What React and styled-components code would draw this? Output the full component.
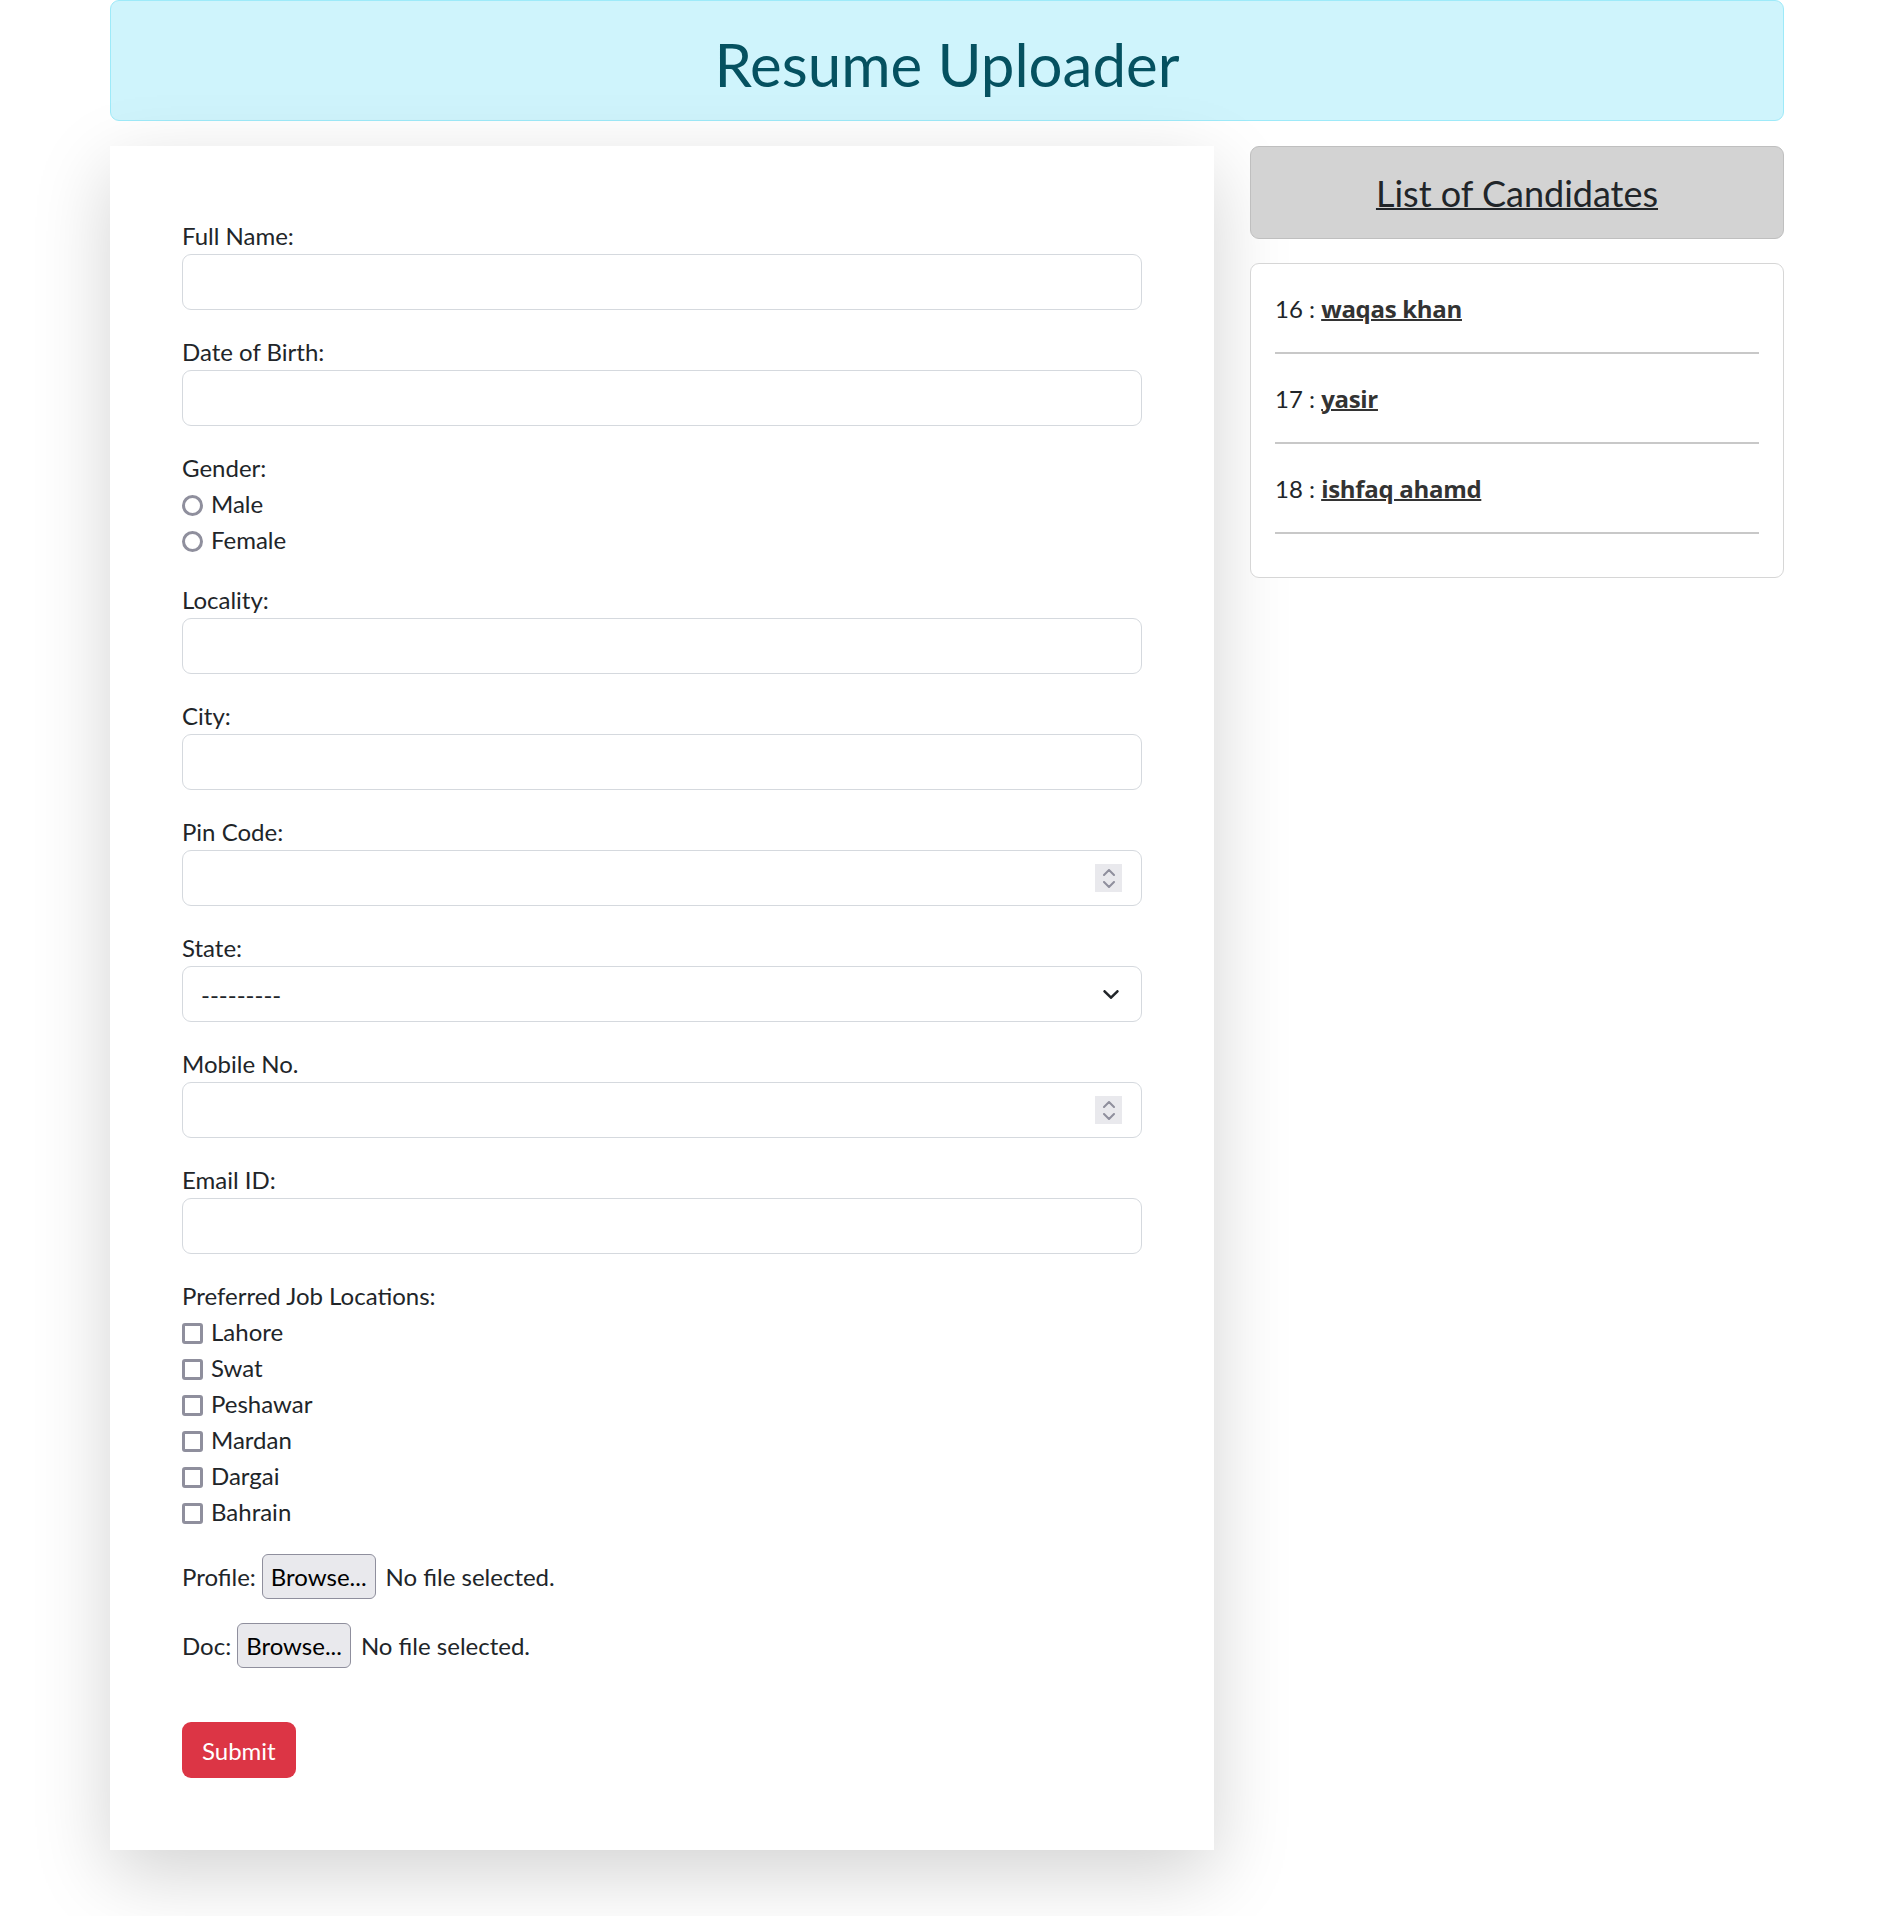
import React from "react";
import styled, { createGlobalStyle } from "styled-components";

const GlobalStyle = createGlobalStyle`
  * {
    box-sizing: border-box;
  }
  body {
    margin: 0;
    background: #fff;
    color: #212529;
    font-family: Lato, "Open Sans", sans-serif;
  }
`;

const Page = styled.div`
  width: 1674px;
  margin: 0 auto;
  padding-bottom: 66px;
`;

const Banner = styled.header`
  height: 121px;
  padding-top: 27px;
  text-align: center;
  background-color: #cff4fc;
  border: 1px solid #9eeaf9;
  border-radius: 9px;
`;

const BannerTitle = styled.h1`
  margin: 0;
  font-size: 60px;
  font-weight: 400;
  line-height: 72px;
  color: #055160;
`;

const Columns = styled.div`
  display: flex;
  align-items: flex-start;
  gap: 36px;
  margin-top: 25px;
`;

const FormCard = styled.form`
  width: 1104px;
  padding: 72px;
  background: #fff;
  box-shadow: 0 24px 72px rgba(0, 0, 0, 0.175);
`;

const Group = styled.div`
  margin-bottom: 24px;
`;

const Label = styled.label`
  display: block;
  font-size: 24px;
  line-height: 36px;
`;

const TextInput = styled.input`
  display: block;
  width: 100%;
  height: 56px;
  padding: 9px 18px;
  font: 24px Lato, sans-serif;
  color: #212529;
  background: #fff;
  border: 1px solid #d5d9de;
  border-radius: 9px;
  outline: none;
`;

const FieldBox = styled.div`
  display: flex;
  align-items: center;
  height: 56px;
  padding: 0 ${(props) => props.$right || 19}px 0 18px;
  background: #fff;
  border: 1px solid #d5d9de;
  border-radius: 9px;
`;

const BareInput = styled.input`
  flex: 1;
  min-width: 0;
  height: 100%;
  padding: 0;
  font: 24px Lato, sans-serif;
  color: #212529;
  border: none;
  outline: none;
  background: transparent;
  appearance: textfield;
  &::-webkit-inner-spin-button,
  &::-webkit-outer-spin-button {
    display: none;
  }
`;

const BareSelect = styled.select`
  flex: 1;
  height: 100%;
  padding: 0;
  font: 24px Lato, sans-serif;
  color: #212529;
  border: none;
  outline: none;
  background: transparent;
  appearance: none;
`;

const Spinner = styled.span`
  display: flex;
  flex-direction: column;
  align-items: center;
  justify-content: center;
  gap: 5px;
  width: 27px;
  height: 28px;
  background: #e9e9ed;
`;

const ChoiceRow = styled.label`
  display: flex;
  align-items: center;
  gap: 8px;
  font-size: 24px;
  line-height: 36px;
`;

const Mark = styled.input`
  appearance: none;
  flex: none;
  width: 21px;
  height: 21px;
  margin: 2px 0 0;
  background: #fff;
  border: 3px solid #8f8f9d;
  border-radius: ${(props) => (props.type === "radio" ? "50%" : "3px")};
`;

const FileRow = styled.div`
  display: flex;
  align-items: center;
  height: 45px;
  margin-bottom: 24px;
  font-size: 24px;
`;

const FileButton = styled.button`
  height: 45px;
  margin: 0 10px 0 6px;
  padding: 0 8px;
  font: 24px Lato, sans-serif;
  color: #000;
  background: #e9e9ed;
  border: 1px solid #8f8f9d;
  border-radius: 6px;
`;

const SubmitButton = styled.button`
  display: block;
  height: 56px;
  margin-top: 54px;
  padding: 0 20px;
  font: 24px Lato, sans-serif;
  color: #fff;
  background: #dc3545;
  border: none;
  border-radius: 9px;
`;

const Side = styled.aside`
  display: flex;
  flex-direction: column;
  gap: 24px;
  width: 534px;
`;

const SideHeader = styled.div`
  height: 93px;
  padding-top: 25px;
  text-align: center;
  background: #d3d3d3;
  border: 1px solid #bfbfbf;
  border-radius: 9px;
`;

const SideTitle = styled.h4`
  margin: 0;
  font-size: 36px;
  font-weight: 400;
  line-height: 43px;
  text-decoration: underline;
  text-decoration-thickness: 2px;
`;

const ListCard = styled.div`
  padding: 27px 24px 16px;
  background: #fff;
  border: 1px solid #d6d6d6;
  border-radius: 9px;
`;

const CandidateLine = styled.div`
  font-size: 24px;
  line-height: 36px;
`;

const CandidateLink = styled.a`
  font-family: "Open Sans", Lato, sans-serif;
  font-weight: 700;
  letter-spacing: -0.3px;
  color: #333;
  text-decoration: underline;
  text-decoration-thickness: 2px;
`;

const Divider = styled.hr`
  margin: 25px 0 27px;
  border: 0;
  border-top: 2px solid #c8c8c8;
`;

const Chevron = ({ up, color = "#8f8f9d", w = 12, h = 7 }) => (
  <svg width={w} height={h} viewBox="0 0 12 7">
    <path
      d={up ? "M1 6 6 1l5 5" : "M1 1l5 5 5-5"}
      fill="none"
      stroke={color}
      strokeWidth="2"
      strokeLinecap="round"
      strokeLinejoin="round"
    />
  </svg>
);

const TextField = ({ label, type = "text" }) => (
  <Group>
    <Label>{label}</Label>
    <TextInput type={type} />
  </Group>
);

const NumberField = ({ label }) => (
  <Group>
    <Label>{label}</Label>
    <FieldBox>
      <BareInput type="number" />
      <Spinner>
        <Chevron up />
        <Chevron />
      </Spinner>
    </FieldBox>
  </Group>
);

const candidates = [
  { id: 16, name: "waqas khan" },
  { id: 17, name: "yasir" },
  { id: 18, name: "ishfaq ahamd" },
];

const locations = ["Lahore", "Swat", "Peshawar", "Mardan", "Dargai", "Bahrain"];

export default function App() {
  return (
    <Page>
      <GlobalStyle />
      <Banner>
        <BannerTitle>Resume Uploader</BannerTitle>
      </Banner>
      <Columns>
        <FormCard onSubmit={(e) => e.preventDefault()}>
          <TextField label="Full Name:" />
          <TextField label="Date of Birth:" />
          <Group>
            <Label>Gender:</Label>
            <ChoiceRow>
              <Mark type="radio" name="gender" />
              Male
            </ChoiceRow>
            <ChoiceRow>
              <Mark type="radio" name="gender" />
              Female
            </ChoiceRow>
          </Group>
          <TextField label="Locality:" />
          <TextField label="City:" />
          <NumberField label="Pin Code:" />
          <Group>
            <Label>State:</Label>
            <FieldBox $right={22}>
              <BareSelect defaultValue="">
                <option value="">---------</option>
              </BareSelect>
              <Chevron color="#212529" w={16} h={9} />
            </FieldBox>
          </Group>
          <NumberField label="Mobile No." />
          <TextField label="Email ID:" type="email" />
          <Group>
            <Label>Preferred Job Locations:</Label>
            {locations.map((loc) => (
              <ChoiceRow key={loc}>
                <Mark type="checkbox" />
                {loc}
              </ChoiceRow>
            ))}
          </Group>
          <FileRow>
            Profile:
            <FileButton type="button">Browse...</FileButton>
            No file selected.
          </FileRow>
          <FileRow>
            Doc:
            <FileButton type="button">Browse...</FileButton>
            No file selected.
          </FileRow>
          <SubmitButton type="submit">Submit</SubmitButton>
        </FormCard>
        <Side>
          <SideHeader>
            <SideTitle>List of Candidates</SideTitle>
          </SideHeader>
          <ListCard>
            {candidates.map((c) => (
              <React.Fragment key={c.id}>
                <CandidateLine>
                  {c.id} : <CandidateLink href="#">{c.name}</CandidateLink>
                </CandidateLine>
                <Divider />
              </React.Fragment>
            ))}
          </ListCard>
        </Side>
      </Columns>
    </Page>
  );
}
